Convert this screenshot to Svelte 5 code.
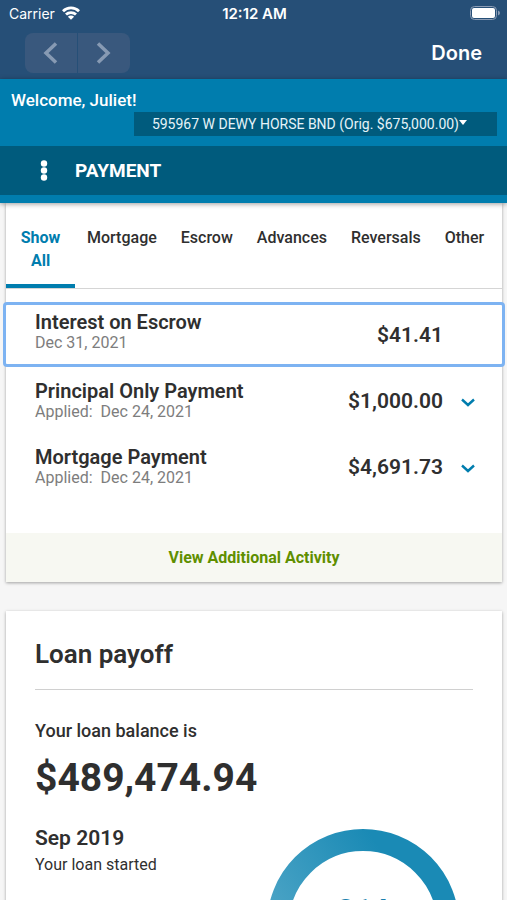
<script lang="ts">
  interface Activity {
    title: string;
    date: string;
    applied: boolean;
    amount: string;
  }

  const tabs = ['Show All', 'Mortgage', 'Escrow', 'Advances', 'Reversals', 'Other'];

  const activities: Activity[] = [
    { title: 'Interest on Escrow', date: 'Dec 31, 2021', applied: false, amount: '$41.41' },
    { title: 'Principal Only Payment', date: 'Dec 24, 2021', applied: true, amount: '$1,000.00' },
    { title: 'Mortgage Payment', date: 'Dec 24, 2021', applied: true, amount: '$4,691.73' }
  ];

  let activeTab = $state('Show All');
  let selected = $state(0);
</script>

<div class="screen">
  <div class="browser">
    <div class="status">
      <div class="carrier">
        <span>Carrier</span>
        <svg width="18" height="14" viewBox="0 0 18 14" aria-hidden="true">
          <g fill="none" stroke="#fff" stroke-width="2.8">
            <path d="M1 5.2a11.4 11.4 0 0 1 16 0" />
            <path d="M4 8.6a7.1 7.1 0 0 1 10 0" />
          </g>
          <path d="M9 13.8 5.9 10.8a4.4 4.4 0 0 1 6.2 0z" fill="#fff" />
        </svg>
      </div>
      <span class="time">12:12 AM</span>
      <svg class="battery" width="30" height="14" viewBox="0 0 30 14" aria-hidden="true">
        <rect x="0.5" y="0.5" width="26" height="13" rx="4" fill="none" stroke="#8b9cb5" />
        <rect x="2" y="2" width="23" height="10" rx="2" fill="#fff" />
        <path d="M28 4.5q2 .8 2 2.5t-2 2.5z" fill="#8b9cb5" />
      </svg>
    </div>
    <div class="toolbar">
      <div class="history">
        <button aria-label="Back">
          <svg width="16" height="22" viewBox="0 0 16 22"><path d="M13 1.5 3 11l10 9.5" /></svg>
        </button>
        <button aria-label="Forward">
          <svg width="16" height="22" viewBox="0 0 16 22"><path d="M2 1.5 12 11 2 20.5" /></svg>
        </button>
      </div>
      <button class="done">Done</button>
    </div>
  </div>

  <header>
    <p class="welcome">Welcome, Juliet!</p>
    <button class="property">
      <span>595967 W DEWY HORSE BND (Orig. $675,000.00)</span>
      <svg width="8" height="5" viewBox="0 0 8 5" aria-hidden="true"><path d="M0 0h8L4 5z" fill="#fff" /></svg>
    </button>
    <div class="title-bar">
      <button class="menu" aria-label="Menu">
        <svg width="8" height="22" viewBox="0 0 8 22" fill="#fff">
          <circle cx="4" cy="3.5" r="3.2" />
          <circle cx="4" cy="10.500" r="3.2" />
          <circle cx="4" cy="17.500" r="3.2" />
        </svg>
      </button>
      <h1>PAYMENT</h1>
    </div>
  </header>

  <main>
    <section class="card activity">
      <div class="tabs" role="tablist">
        {#each tabs as tab}
          <button
            role="tab"
            aria-selected={activeTab === tab}
            class:active={activeTab === tab}
            onclick={() => (activeTab = tab)}
          >
            {tab}
          </button>
        {/each}
      </div>

      <div class="rows">
        {#each activities as item, i}
          <button class="row" class:selected={selected === i} onclick={() => (selected = i)}>
            <span class="info" class:simple={!item.applied}>
              <span class="name">{item.title}</span>
              <span class="date">{#if item.applied}<span class="label">Applied:</span>{/if}{item.date}</span>
            </span>
            <span class="amount">{item.amount}</span>
            <span class="toggle">
              {#if item.applied}
                <svg width="14" height="9" viewBox="0 0 14 9" aria-hidden="true">
                  <path d="M1 1.5 7 7l6-5.5" fill="none" stroke="#007dae" stroke-width="2.4" />
                </svg>
              {/if}
            </span>
          </button>
        {/each}
      </div>

      <button class="more">View Additional Activity</button>
    </section>

    <section class="card payoff">
      <h2>Loan payoff</h2>
      <p class="balance-label">Your loan balance is</p>
      <p class="balance">$489,474.94</p>
      <div class="progress">
        <div>
          <p class="start">Sep 2019</p>
          <p class="start-label">Your loan started</p>
        </div>
        <div class="ring">
          <svg width="192" height="192" viewBox="0 0 192 192" aria-hidden="true">
            <defs>
              <linearGradient id="ring" x1="0.1" y1="0.6" x2="0.7" y2="0.2">
                <stop offset="0" stop-color="#4aa3c5" />
                <stop offset="1" stop-color="#1a8ab5" />
              </linearGradient>
            </defs>
            <circle cx="96" cy="96" r="85" fill="none" stroke="url(#ring)" stroke-width="22" />
          </svg>
          <span class="count">314</span>
        </div>
      </div>
    </section>
  </main>
</div>

<style>
  :global(body) {
    margin: 0;
    background: #f6f6f6;
  }

  .screen {
    display: flex;
    flex-direction: column;
    height: 100vh;
    overflow: hidden;
    font-family: Roboto, 'Liberation Sans', sans-serif;
    color: #2f2f2f;
  }

  button {
    padding: 0;
    border: none;
    background: none;
    color: inherit;
    font: inherit;
    cursor: pointer;
  }

  p,
  h1,
  h2 {
    margin: 0;
  }

  svg {
    display: block;
  }

  .browser {
    flex: none;
    background: #264f77;
    color: #fff;
    font-family: Inter, 'Liberation Sans', sans-serif;
  }

  .status {
    display: grid;
    grid-template-columns: 1fr auto 1fr;
    align-items: center;
    height: 26px;
    padding: 0 7px 0 9px;
    font-size: 14px;
  }

  .carrier {
    display: flex;
    align-items: center;
    gap: 7px;
  }

  .time {
    font-size: 15px;
    font-weight: 600;
  }

  .battery {
    justify-self: end;
  }

  .toolbar {
    display: flex;
    align-items: center;
    justify-content: space-between;
    height: 53px;
    padding: 0 25px;
  }

  .history {
    display: flex;
    gap: 1px;
    border-radius: 8px;
    overflow: hidden;
  }

  .history button {
    display: flex;
    align-items: center;
    justify-content: center;
    width: 52px;
    height: 40px;
    background: #39587d;
  }

  .history path {
    fill: none;
    stroke: #879ab3;
    stroke-width: 3.5;
  }

  .done {
    font-size: 20px;
    font-weight: 600;
  }

  header {
    position: relative;
    z-index: 1;
    flex: none;
    display: flex;
    flex-direction: column;
    padding: 10px 0 8px;
    background: #007dae;
    color: #fff;
    box-shadow: 0 1px 5px rgba(0, 0, 0, 0.4);
  }

  .welcome {
    padding: 0 11px;
    font-size: 17px;
    line-height: 23px;
    font-weight: 500;
  }

  .property {
    display: flex;
    align-self: flex-end;
    height: 24px;
    margin-right: 10px;
    padding: 0 30px 0 18px;
    background: #005b7d;
    color: #e6f3f8;
    font-size: 14px;
    line-height: 25px;
  }

  .property svg {
    margin-top: 8px;
  }

  .title-bar {
    display: flex;
    align-items: center;
    gap: 27px;
    height: 49px;
    margin-top: 10px;
    padding: 0 40px;
    background: #005b7d;
  }

  h1 {
    font-size: 19px;
    font-weight: 700;
  }

  main {
    flex: 1;
    min-height: 0;
    padding: 0 5px 0 6px;
    overflow-y: auto;
    scrollbar-width: none;
  }

  .card {
    background: #fff;
    box-shadow: 0 1px 3px rgba(0, 0, 0, 0.35);
  }

  .tabs {
    display: flex;
    height: 85px;
    border-bottom: 1px solid #d5d5d5;
  }

  .tabs button {
    box-sizing: border-box;
    display: flex;
    flex: none;
    align-items: flex-start;
    justify-content: center;
    height: 85px;
    padding: 23px 12px 0;
    border-bottom: 4px solid transparent;
    font-size: 16px;
    line-height: 23px;
    font-weight: 500;
  }

  .tabs button.active {
    width: 69px;
    border-color: #007dae;
    color: #007dae;
    font-weight: 700;
  }

  .rows {
    display: flex;
    flex-direction: column;
    gap: 7px;
    padding: 16px 0 37px;
  }

  .row {
    display: flex;
    align-items: center;
    height: 59px;
    padding: 0 9px 0 29px;
    text-align: left;
  }

  .row.selected {
    outline: 3px solid #7db3f2;
    border-radius: 1px;
  }

  .info {
    flex: 1;
    display: flex;
    flex-direction: column;
  }

  .info.simple {
    padding-bottom: 6px;
  }

  .name {
    font-size: 20px;
    line-height: 22px;
    font-weight: 600;
  }

  .date {
    color: #7d7d7d;
    font-size: 16px;
    line-height: 20px;
  }

  .label {
    margin-right: 8px;
  }

  .amount {
    font-size: 21px;
    font-weight: 600;
  }

  .toggle {
    display: flex;
    justify-content: center;
    width: 50px;
    padding-top: 4px;
  }

  .more {
    width: 100%;
    height: 49px;
    background: #f7f8f2;
    color: #5f8f00;
    font-size: 16px;
    font-weight: 700;
  }

  .payoff {
    margin-top: 29px;
    padding: 27px 29px 40px;
  }

  h2 {
    padding-bottom: 19px;
    border-bottom: 1px solid #d0d0d0;
    font-size: 26px;
    line-height: 32px;
    font-weight: 600;
  }

  .balance-label {
    margin-top: 29px;
    font-size: 18px;
    line-height: 24px;
    font-weight: 500;
  }

  .balance {
    margin-top: 11px;
    font-size: 39px;
    line-height: 48px;
    font-weight: 700;
  }

  .progress {
    display: flex;
    justify-content: space-between;
    margin-top: 24px;
    padding-right: 14px;
  }

  .start {
    font-size: 21px;
    line-height: 24px;
    font-weight: 600;
  }

  .start-label {
    font-size: 16px;
    line-height: 30px;
  }

  .ring {
    display: grid;
    justify-items: center;
    margin-top: 3px;
  }

  .ring > * {
    grid-area: 1 / 1;
  }

  .count {
    margin-top: 65px;
    color: #1a7fae;
    font-size: 30px;
    line-height: 32px;
    font-weight: 700;
  }
</style>
